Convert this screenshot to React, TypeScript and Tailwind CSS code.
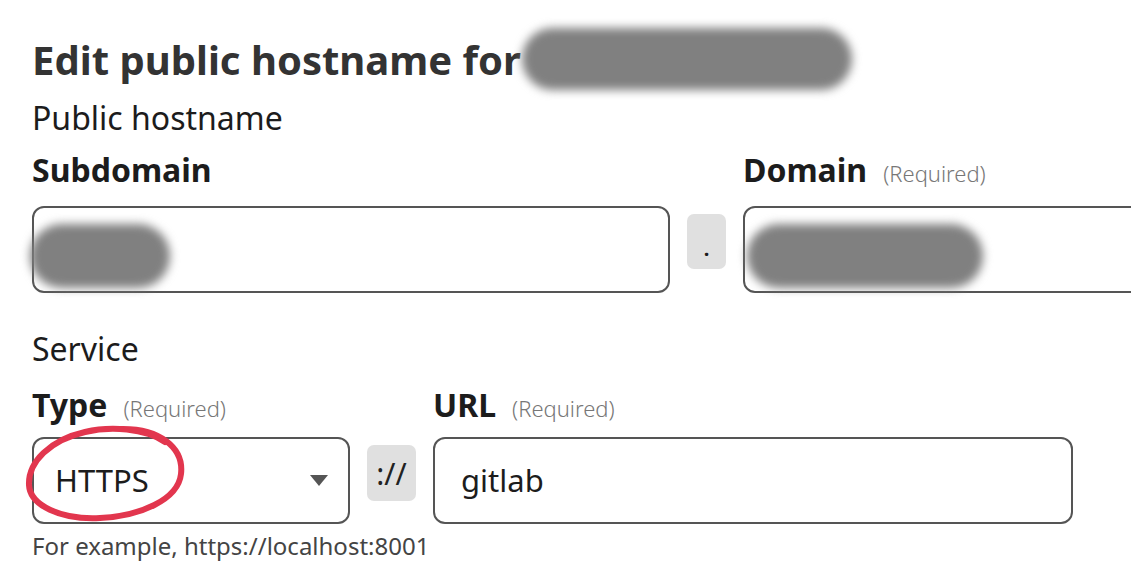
import React from "react";

const font = { fontFamily: '"Noto Sans", "Open Sans", Arial, sans-serif' };

function Blob({ className }: { className: string }) {
  return <div className={`pointer-events-none absolute rounded-full bg-[#808080] blur-[5px] ${className}`} />;
}

function Required() {
  return <span className="ml-4 text-[22px] leading-[44px] font-light text-[#777]">(Required)</span>;
}

export default function App() {
  return (
    <div style={font} className="relative h-[580px] w-[1131px] overflow-hidden bg-white pl-8 pt-[28px] text-[#1c1c1c]">
      {/* title */}
      <div className="relative">
        <h1 className="text-[40px] leading-[64px] font-bold text-[#333]">Edit public hostname for</h1>
        <Blob className="left-[490px] top-0 h-[62px] w-[330px]" />
      </div>
      <div className="mt-[4px] text-[32px] leading-[44px]">Public hostname</div>

      {/* public hostname row */}
      <div className="mt-[8px] flex items-end">
        <div className="flex w-[638px] flex-col">
          <label className="flex h-[44px] items-baseline text-[32px] leading-[44px] font-bold">Subdomain</label>
          <div className="relative mt-[14px] h-[87px] rounded-[12px] border-2 border-[#555]">
            <Blob className="-left-[4px] top-[16px] h-[64px] w-[140px]" />
          </div>
        </div>
        <div className="mx-[17px] mb-[24px] flex h-[55px] w-[39px] items-end justify-center rounded-[7px] bg-[#e0e0e0] pb-[10px] text-[20px] leading-none font-bold">
          .
        </div>
        <div className="flex flex-1 flex-col">
          <label className="flex h-[44px] items-baseline text-[32px] leading-[44px] font-bold">
            Domain
            <Required />
          </label>
          <div className="relative mt-[14px] -mr-4 h-[87px] rounded-[12px] border-2 border-[#555]">
            <Blob className="left-[2px] top-[16px] h-[64px] w-[236px]" />
          </div>
        </div>
      </div>

      <div className="mt-[34px] text-[32px] leading-[44px]">Service</div>

      {/* service row */}
      <div className="mt-[12px] flex items-end">
        <div className="flex w-[318px] flex-col">
          <label className="flex h-[44px] items-baseline text-[32px] leading-[44px] font-bold">
            Type
            <Required />
          </label>
          <div className="mt-[10px] flex h-[87px] items-center justify-between rounded-[12px] border-2 border-[#555] pl-[21px] pr-[20px]">
            <span className="text-[31px]">HTTPS</span>
            <svg width="18" height="11" viewBox="0 0 18 11">
              <path d="M0 0 H18 L9 11 Z" fill="#555" />
            </svg>
          </div>
        </div>
        <div className="mx-[17px] mb-[23px] flex h-[56px] w-[49px] items-center justify-center rounded-[7px] bg-[#e0e0e0] text-[30px] text-[#222]">
          ://
        </div>
        <div className="flex w-[640px] flex-col">
          <label className="flex h-[44px] items-baseline text-[32px] leading-[44px] font-bold">
            URL
            <Required />
          </label>
          <div className="mt-[10px] flex h-[87px] items-center rounded-[12px] border-2 border-[#555] pl-[26px]">
            <span className="text-[31px]">gitlab</span>
          </div>
        </div>
      </div>
      <div className="mt-[6px] text-[24px] leading-[32px] text-[#444]">For example, https://localhost:8001</div>

      {/* red annotation circle */}
      <svg className="pointer-events-none absolute left-0 top-0" width="1131" height="580">
        <path
          d="M120 429 C 160 428 184 448 181 474 C 178 500 140 516 100 518 C 60 520 30 505 29 485 C 28 462 50 440 85 432 C 110 426 145 428 165 442"
          fill="none"
          stroke="#e2364e"
          strokeWidth="6"
          strokeLinecap="round"
        />
      </svg>
    </div>
  );
}
